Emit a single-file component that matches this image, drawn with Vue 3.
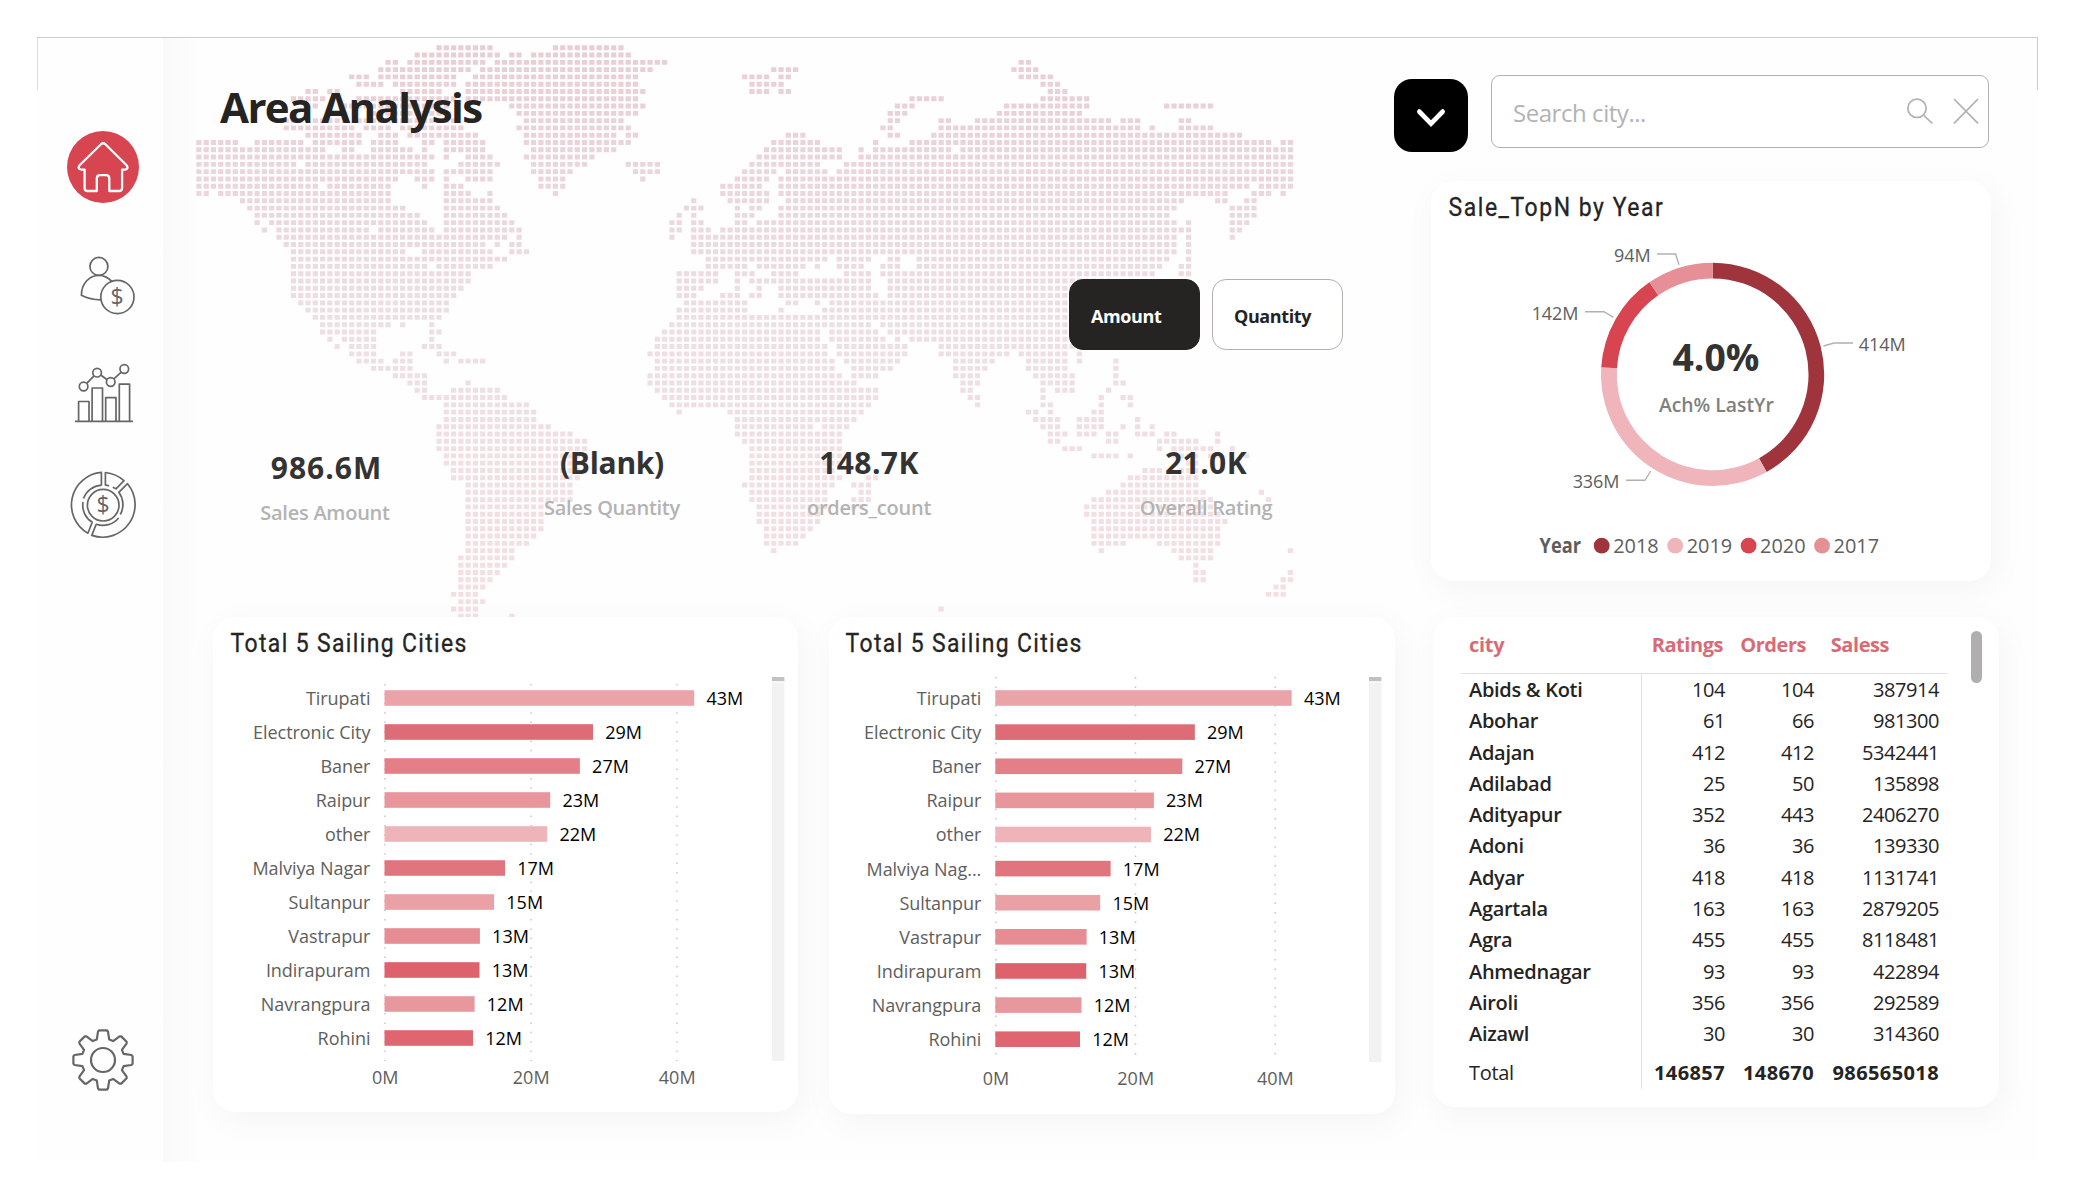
<script setup>
// Dotted world map: per row, inclusive column runs of dots
const mapRows = `33-40 49-58
30-41 43-44 46-59
26-27 29-39 41-64 113-114
25-37 39-62 79-82 112-115
21-23 25-35 38-60 75-78 80-81 113-117
22-25 27-35 37-60 76-80 116-118
15-16 18-19 28-33 37-61 76-78 80-81 117-119
13-17 22-35 37-60 98-102 116-122
15-16 20-34 43-61 96-98 111-122 133-139
24-34 44-60 95-97 110-121
12-20 22-35 45-58 95-96 102-103 107-125 127-129 135-136
12-21 23-26 28-36 44-59 94-95 102-129 131-131 135-139
15-22 25-27 29-38 45-57 59-60 81-83 95-96 101-143
0-5 8-14 16-22 24-27 31-32 34-39 45-59 79-85 93-93 98-147 149-150
0-17 20-21 24-29 31-31 34-39 46-57 78-88 91-91 93-103 105-150
0-32 34-34 37-40 45-54 77-88 91-150
0-13 15-31 36-41 46-53 59-63 76-85 89-150
0-32 34-40 46-51 60-63 75-79 81-86 88-150
0-27 30-32 34-34 37-40 47-50 61-61 74-78 80-150
0-16 18-26 31-31 34-36 47-50 72-77 80-144 146-150
0-1 3-26 34-37 40-40 49-49 72-78 80-141 145-147 149-149
6-26 34-40 68-68 73-78 81-135 140-141 144-145
7-28 34-41 67-69 74-74 76-77 80-134 142-145
8-30 34-42 66-66 68-68 74-76 80-133 142-145
8-8 10-31 34-43 65-66 68-69 74-75 77-134 136-136 142-144
9-9 11-23 25-32 34-44 65-66 68-70 72-136 142-143
11-42 44-44 65-65 68-134 136-136 142-142
12-39 41-41 43-44 68-134 136-136
13-28 31-40 43-45 68-134 136-136
13-42 70-86 88-92 95-96 99-133 136-136
13-31 33-40 70-75 77-83 85-85 88-91 94-96 99-132 135-136
13-37 66-71 74-76 79-82 89-92 94-131 135-136
13-37 66-71 74-74 76-92 95-125
13-36 66-69 74-74 77-77 80-92 95-125
13-35 66-68 72-74 76-77 80-93 95-125
14-34 67-75 81-82 85-85 87-125
15-34 66-75 80-80 86-125
16-33 66-125
17-26 28-28 32-32 65-92 94-125
17-24 32-33 64-85 87-93 95-125
18-18 20-24 32-32 63-85 87-94 96-96 98-125
19-19 21-24 31-33 63-86 88-97 102-121
21-24 28-29 33-35 62-86 88-97 102-111 113-119 121-121
22-25 27-29 34-34 36-39 63-87 89-96 104-109 114-119 121-121 126-126
24-29 63-87 90-95 104-108 114-119 126-126
27-31 62-88 90-93 104-107 115-120 126-126
29-31 37-37 62-90 105-107 116-120 126-127
30-31 35-41 63-93 105-106 116-116 118-120 125-125
31-42 64-93 106-107 116-116 124-124 127-128
34-45 65-92 107-107 116-117 124-124 128-128
34-46 66-66 73-91 114-115 117-117 123-124
34-46 74-90 115-118 121-124 129-129
33-48 74-84 86-89 116-118 121-124 127-127 129-129 131-131
33-51 74-88 117-119 121-123 125-126 129-131 133-134 140-140
33-53 75-88 117-118 125-126 132-137 140-140
33-53 76-88 119-121 132-132 134-139 142-142
34-53 76-88 123-126 128-128 134-137 139-140 144-144
34-53 76-88 136-137
35-52 76-87 130-132 135-137
35-52 76-88 92-93 128-137
37-51 75-87 90-92 127-137
37-51 76-86 91-92 125-138 146-146
37-51 76-86 90-92 123-139 147-147
37-48 77-86 90-91 122-139
37-47 77-85 122-140
37-47 77-85 123-141
37-47 78-84 123-140
37-46 78-83 123-140
37-45 78-82 123-127 132-140
37-43 79-79 124-124 134-139 150-150
36-43 135-139
36-42 137-137
36-41 137-138 150-150
36-40 137-138 149-150
36-39 148-149
35-38 147-149
36-39
35-38 102-102
36-38 43-43`.split('\n')

const mapPath = mapRows.map((row, r) => row.split(' ').map((run) => {
  const [a, b] = run.split('-').map(Number)
  let d = ''
  for (let c = a; c <= b; c++) {
    d += `M${(33.3 + c * 7.277).toFixed(2)} ${(8.3 + r * 7.288).toFixed(2)}h5.2v4.9h-5.2z`
  }
  return d
}).join('')).join('')

const kpis = [
  { value: '986.6M', label: 'Sales Amount' },
  { value: '(Blank)', label: 'Sales Quantity' },
  { value: '148.7K', label: 'orders_count' },
  { value: '21.0K', label: 'Overall Rating' },
]

const cities = [
  ['Tirupati', '43M', 309.7, '#eba3aa'],
  ['Electronic City', '29M', 208.5, '#de6c77'],
  ['Baner', '27M', 195.4, '#e47f88'],
  ['Raipur', '23M', 165.7, '#e8959b'],
  ['other', '22M', 162.7, '#efb3ba'],
  ['Malviya Nagar', '17M', 120.5, '#e1757e'],
  ['Sultanpur', '15M', 109.6, '#eaa1a6'],
  ['Vastrapur', '13M', 95.4, '#e68c93'],
  ['Indirapuram', '13M', 95, '#dd626c'],
  ['Navrangpura', '12M', 90.1, '#e7989d'],
  ['Rohini', '12M', 88.5, '#df6671'],
]

const charts = [
  { w: 585, h: 495, x0: 171.5, scale: 1, tick: 146, pitch: 34, labelX: 157.4, top: 67, bottom: 444, sx: 559, title: 17.6, rename: {} },
  { w: 566, h: 497, x0: 166.3, scale: 0.957, tick: 139.7, pitch: 34.12, labelX: 152.3, top: 60, bottom: 445, sx: 540, title: 16.6, rename: { 'Malviya Nagar': 'Malviya Nag...' } },
]

// Donut geometry
const slices = [
  { v: 414, color: '#a0343c' },
  { v: 336, color: '#efb5bb' },
  { v: 142, color: '#d64550' },
  { v: 94, color: '#e68f96' },
]
const sum = 986.6
let acc = 0
const arcs = slices.map((s, i) => {
  const a0 = (acc / sum) * Math.PI * 2
  acc += s.v
  const a1 = i === 3 ? Math.PI * 2 : (acc / sum) * Math.PI * 2
  const p = (a, r) => `${(281.6 + r * Math.sin(a)).toFixed(2)} ${(193.3 - r * Math.cos(a)).toFixed(2)}`
  const big = a1 - a0 > Math.PI ? 1 : 0
  return {
    color: s.color,
    d: `M${p(a0, 111.6)}A111.6 111.6 0 ${big} 1 ${p(a1, 111.6)}L${p(a1, 95.9)}A95.9 95.9 0 ${big} 0 ${p(a0, 95.9)}Z`,
  }
})
const legend = [
  ['2018', '#a0343c'], ['2019', '#efb5bb'], ['2020', '#d64550'], ['2017', '#e68f96'],
]

const rows = [
  ['Abids & Koti', 104, 104, 387914],
  ['Abohar', 61, 66, 981300],
  ['Adajan', 412, 412, 5342441],
  ['Adilabad', 25, 50, 135898],
  ['Adityapur', 352, 443, 2406270],
  ['Adoni', 36, 36, 139330],
  ['Adyar', 418, 418, 1131741],
  ['Agartala', 163, 163, 2879205],
  ['Agra', 455, 455, 8118481],
  ['Ahmednagar', 93, 93, 422894],
  ['Airoli', 356, 356, 292589],
  ['Aizawl', 30, 30, 314360],
]

// Gear outline with eight teeth
const gear = Array.from({ length: 8 }, (_, k) => {
  const t = (k * Math.PI) / 4
  return [[-6.2, -20.6], [-5, -28.4], [-3.8, -29.6], [3.8, -29.6], [5, -28.4], [6.2, -20.6]]
    .map(([x, y]) => `${(x * Math.cos(t) - y * Math.sin(t)).toFixed(2)} ${(x * Math.sin(t) + y * Math.cos(t)).toFixed(2)}`)
    .join('L')
}).join('L')
</script>

<template>
  <div class="page">
    <div class="frame">
      <nav class="sidebar">
        <svg class="ico home" viewBox="63 127 80 80">
          <circle cx="103" cy="167" r="36" fill="#d64550" />
          <path d="M84.6 169.6H81.5Q77 169 79.6 165.2L101 144.2Q103.2 142.2 105.4 144.2L126.6 165.2Q129 169 125 169.6H122.1V188q0 3-3 3H109.3V178.5q0-3.3-3.3-3.3h-5.9q-3.3 0-3.3 3.3V191H87.6q-3 0-3-3Z" fill="none" stroke="#fff" stroke-width="2.3" stroke-linejoin="round" />
        </svg>
        <svg class="ico user" viewBox="63 252 80 66">
          <g class="line">
            <circle cx="98.9" cy="266.4" r="9" />
            <path d="M111.8 281.3Q106 275.3 99 275.3C89 275.3 81.5 284 81.4 295.2Q90 299.6 101 299.8" />
            <circle cx="117.4" cy="297" r="16.6" />
          </g>
          <text x="117.2" y="305.2" text-anchor="middle" class="dollar">$</text>
        </svg>
        <svg class="ico bars" viewBox="63 360 80 66">
          <g class="line">
            <path d="M75 421.3H133M78.6 421V401.5H89V421M92.1 421V388H102.5V421M105.7 421V397.6H116V421M119.3 421V384.2H129.6V421" />
            <path d="M86.8 383.4L94 375.8M100.8 375L107.1 379.7M113.8 378.8L121.3 372.2" />
            <circle cx="83.6" cy="386.5" r="4.3" /><circle cx="97.1" cy="372.7" r="4.3" />
            <circle cx="110.7" cy="382" r="4.3" /><circle cx="124.3" cy="369" r="4.3" />
          </g>
        </svg>
        <svg class="ico pie" viewBox="63 468 80 74">
          <g class="line">
            <circle cx="103.2" cy="505.2" r="15.8" />
            <path d="M83.5 498.5A20.3 20.3 0 0 1 101.4 485.1V472.4A32.6 32.6 0 0 0 87.9 533.2L92.2 522.3A20.3 20.3 0 0 1 83 502" />
            <path d="M109.2 485.8Q107.3 485.3 105.4 485.1V472.5A32.6 32.6 0 0 1 124 480.7L116 488.8L112.8 487.3" />
            <path d="M120.3 514.5A20.3 20.3 0 0 0 118.8 492.3L127.5 483.7A32.6 32.6 0 0 1 91.8 535.4L96.2 524.3A20.3 20.3 0 0 0 118.6 518" />
          </g>
          <text x="103" y="513.3" text-anchor="middle" class="dollar">$</text>
        </svg>
        <svg class="ico gear" viewBox="62.5 1020 80 80">
          <g class="line gearline" transform="translate(102.5 1060)">
            <path :d="`M${gear}Z`" /><circle r="12" />
          </g>
        </svg>
      </nav>

      <main class="main">
        <svg class="map" width="1130" height="580">
          <defs>
            <linearGradient id="dots" gradientUnits="userSpaceOnUse" x1="0" y1="0" x2="0" y2="580">
              <stop offset="0" stop-color="#e8ced4" />
              <stop offset="0.5" stop-color="#eedfe2" />
              <stop offset="1" stop-color="#f5dfe3" />
            </linearGradient>
          </defs>
          <path :d="mapPath" fill="url(#dots)" />
        </svg>

        <section class="left">
          <header class="hero">
            <h1>Area Analysis</h1>
            <div class="toggle">
              <button class="on">Amount</button>
              <button>Quantity</button>
            </div>
            <div class="kpis">
              <div v-for="k in kpis" :key="k.label" class="kpi">
                <div class="value">{{ k.value }}</div>
                <div class="label">{{ k.label }}</div>
              </div>
            </div>
          </header>

          <div class="charts">
            <article v-for="(c, i) in charts" :key="i" class="card" :style="{ width: c.w + 'px', height: c.h + 'px' }">
              <svg :width="c.w" :height="c.h">
                <text class="din" :transform="`translate(${c.title} 35) scale(.9 1)`" textLength="262" lengthAdjust="spacing">Total 5 Sailing Cities</text>
                <line v-for="t in 3" :key="t" class="grid" :x1="c.x0 + 0.5 + (t - 1) * c.tick" :x2="c.x0 + 0.5 + (t - 1) * c.tick" :y1="c.top" :y2="c.bottom" />
                <g v-for="(row, j) in cities" :key="row[0]">
                  <text class="cat" :x="c.labelX" :y="88 + j * c.pitch">{{ c.rename[row[0]] || row[0] }}</text>
                  <rect :x="c.x0" :y="73.2 + j * c.pitch" :width="row[2] * c.scale" height="15.6" :fill="row[3]" />
                  <text class="val" :x="c.x0 + row[2] * c.scale + 12.2" :y="88 + j * c.pitch">{{ row[1] }}</text>
                </g>
                <text v-for="(t, j) in ['0M', '20M', '40M']" :key="t" class="axis" :x="c.x0 + 0.7 + j * c.tick" :y="c.bottom + 23">{{ t }}</text>
                <rect :x="c.sx" y="60" width="12.4" height="4.2" fill="#c1c1c1" />
                <rect :x="c.sx" y="65.5" width="12.4" :height="c.bottom - 65.5" fill="#f2f2f2" />
              </svg>
            </article>
          </div>
        </section>

        <section class="right">
          <div class="tools">
            <button class="drop">
              <svg width="36" height="24"><path d="M5 4.5L18 16.5L31 4.5" transform="translate(1.8 1.2) scale(.9 1)" fill="none" stroke="#fff" stroke-width="5" stroke-linecap="round" /></svg>
            </button>
            <div class="search">
              <span>Search city...</span>
              <svg width="74" height="28" fill="none" stroke="#b3b0ad" stroke-width="1.7">
                <circle cx="12" cy="11.3" r="9.2" /><path d="M18.3 18L27.3 26.3M49 2L73 26.3M73 2L49 26.3" />
              </svg>
            </div>
          </div>

          <article class="card donut">
            <svg width="560" height="400">
              <text class="din" transform="translate(17.6 35) scale(.9 1)" textLength="238" lengthAdjust="spacing">Sale_TopN by Year</text>
              <path v-for="a in arcs" :key="a.color" :d="a.d" :fill="a.color" />
              <path d="M392.5 165L403 162H422M195 299.3H214L219.7 290M154 130.7H173L182.5 136.3M226 73H244.6L248 83.7" fill="none" stroke="#b3b0ad" stroke-width="1.4" />
              <g class="cat">
                <text x="474.6" y="170">414M</text>
                <text x="188.5" y="307">336M</text>
                <text x="147.5" y="138.8">142M</text>
                <text x="219.6" y="81">94M</text>
              </g>
              <text class="pct" x="285" y="189.8" textLength="87" lengthAdjust="spacingAndGlyphs">4.0%</text>
              <text class="ach" x="285.4" y="230.7" textLength="115" lengthAdjust="spacingAndGlyphs">Ach% LastYr</text>
              <text class="leg lead" x="108.6" y="371.7" textLength="41.5" lengthAdjust="spacingAndGlyphs">Year</text>
              <g v-for="(l, i) in legend" :key="l[0]">
                <circle :cx="170.7 + i * 73.45" cy="364.7" r="7.9" :fill="l[1]" />
                <text class="leg" :x="182.2 + i * 73.45" y="371.7" textLength="45.5" lengthAdjust="spacingAndGlyphs">{{ l[0] }}</text>
              </g>
            </svg>
          </article>

          <article class="card table">
            <div class="grid-table">
              <div class="tr head"><span>city</span><span>Ratings</span><span>Orders</span><span>Saless</span></div>
              <div class="body">
                <div v-for="r in rows" :key="r[0]" class="tr"><span>{{ r[0] }}</span><span>{{ r[1] }}</span><span>{{ r[2] }}</span><span>{{ r[3] }}</span></div>
                <div class="tr total"><span>Total</span><span>146857</span><span>148670</span><span>986565018</span></div>
              </div>
            </div>
            <div class="thumb"></div>
          </article>
        </section>
      </main>
    </div>
  </div>
</template>

<style>
body { background: #fefefe; }
</style>

<style scoped>
* { box-sizing: border-box; }
.page { width: 2075px; height: 1200px; padding: 37px; overflow: hidden; background: #fff; font-family: "Open Sans", "Noto Sans", sans-serif; }
.frame { width: 2001px; height: 1125px; display: flex; background: linear-gradient(#ccc, #ccc) 0 0 / 100% 1px no-repeat, linear-gradient(#ddd, #ddd) 0 0 / 1px 53px no-repeat, linear-gradient(#ccc, #ccc) 100% 0 / 1px 53px no-repeat, #fefefe; }
.sidebar { width: 126px; flex: none; padding: 90px 0 0 26px; display: flex; flex-direction: column; }
.ico { width: 80px; display: block; flex: none; }
.home { height: 80px; }
.user { height: 66px; margin-top: 45px; }
.bars { height: 66px; margin-top: 42px; }
.pie { height: 74px; margin-top: 42px; }
.gear { height: 80px; margin-top: 478px; }
.line { fill: none; stroke: #666; stroke-width: 1.7; stroke-linejoin: round; }
.gearline { stroke-width: 2.2; }
.dollar { font-size: 23px; fill: #666; }

.main { position: relative; flex: 1; display: flex; background: linear-gradient(90deg, #f9f9f9, #fefefe 34px, transparent 34px) 0 1px no-repeat; }
.map { position: absolute; left: 0; top: 0; }
.left, .right { position: relative; }
.left { width: 1268px; flex: none; }
.hero { height: 580px; padding-top: 42px; }
h1 { margin: 0 0 0 57px; font-size: 42px; line-height: 56px; font-weight: 700; letter-spacing: -1.6px; color: #252423; }
.toggle { display: flex; gap: 12px; margin: 144px 0 0 906px; }
.toggle button { width: 131px; height: 71px; border: 1.5px solid #b3b0ad; border-radius: 14px; background: #fff; color: #252423; font: 700 18px/24px "Open Sans", sans-serif; letter-spacing: -.4px; text-align: left; padding: 2px 0 0 21px; }
.toggle button.on { background: #252423; border-color: #252423; color: #fff; }
.kpis { display: flex; margin: 93px 0 0 82px; text-align: center; }
.kpi { width: 160px; white-space: nowrap; }
.kpi:nth-child(1) { padding-top: 5px; }
.kpi:nth-child(2) { margin-left: 127px; }
.kpi:nth-child(3) { margin-left: 97px; }
.kpi:nth-child(4) { margin-left: 177px; }
.value { font-size: 30px; line-height: 40px; font-weight: 700; color: #333; letter-spacing: .4px; }
.kpi:nth-child(1) .value { letter-spacing: 1px; padding-left: 3px; }
.kpi:nth-child(2) .value { letter-spacing: -.3px; }
.label { margin-top: 10px; font-size: 20px; line-height: 30px; font-weight: 600; color: #b3b3b3; letter-spacing: -.25px; }
.charts { display: flex; align-items: flex-start; gap: 31px; padding-left: 50px; }
.card { background: #fff; border-radius: 22px; box-shadow: 4px 8px 34px rgba(0, 0, 0, .045); flex: none; }
.card svg { display: block; }
.din { font: 400 25.5px "Roboto", sans-serif; fill: #252423; stroke: #252423; stroke-width: .3; }
.grid { stroke: #c8c6c4; stroke-width: 1.5; stroke-dasharray: 1.5 7.9; }
.cat { font-size: 18px; fill: #605e5c; text-anchor: end; letter-spacing: -.05px; }
.val { font-size: 18px; fill: #000; letter-spacing: 0; }
.axis { font-size: 18px; fill: #605e5c; text-anchor: middle; letter-spacing: 0; }

.tools { display: flex; align-items: flex-start; margin: 38px 0 0 -37px; }
.drop { width: 74px; height: 73px; margin-top: 4px; border: 0; border-radius: 18px; background: #000; display: flex; align-items: center; justify-content: center; padding: 4px 0 0; }
.search { width: 498px; height: 73px; margin-left: 23px; border: 1.5px solid #b3b3b3; border-radius: 9px; background: #fff; display: flex; justify-content: space-between; align-items: center; padding: 0 9px 0 21px; font-size: 24px; color: #b3b3b3; letter-spacing: -.45px; }
.search span { padding-top: 2px; }
.search svg { margin-top: -1px; }
.donut { width: 560px; height: 400px; margin-top: 29px; }
.pct { font-size: 37px; font-weight: 700; fill: #333; text-anchor: middle; }
.ach { font-size: 20.5px; font-weight: 600; fill: #808080; text-anchor: middle; }
.leg { font-size: 20.5px; fill: #605e5c; }
.lead { font-weight: 700; }
.table { width: 566px; height: 490px; margin: 36px 0 0 2px; padding: 14px 17px 0 28px; display: flex; justify-content: space-between; }
.grid-table { width: 486px; color: #252423; font-size: 20px; line-height: 31.3px; letter-spacing: -.45px; }
.tr { display: flex; padding-left: 8px; }
.tr span { text-align: right; }
.tr span:nth-child(1) { width: 172px; text-align: left; font-weight: 600; letter-spacing: -.3px; }
.tr span:nth-child(2) { width: 84px; }
.tr span:nth-child(3) { width: 89px; }
.tr span:nth-child(4) { width: 125px; }
.head { height: 43px; border-bottom: 1.5px solid #e1e1e1; line-height: 28px; color: #d96b76; font-weight: 700; }
.tr.head span:nth-child(1) { font-weight: 700; }
.tr.head span:nth-child(2) { width: 82px; }
.tr.head span:nth-child(3) { width: 83px; }
.tr.head span:nth-child(4) { width: 83px; }
.body { height: 415px; background: linear-gradient(#e1e1e1, #e1e1e1) 180px 0 / 1px 100% no-repeat; }
.total { padding-top: 7px; font-weight: 700; letter-spacing: .4px; }
.tr.total span:nth-child(1) { font-weight: 400; }
.thumb { width: 11px; height: 52px; border-radius: 6px; background: #b0aeae; }
</style>
